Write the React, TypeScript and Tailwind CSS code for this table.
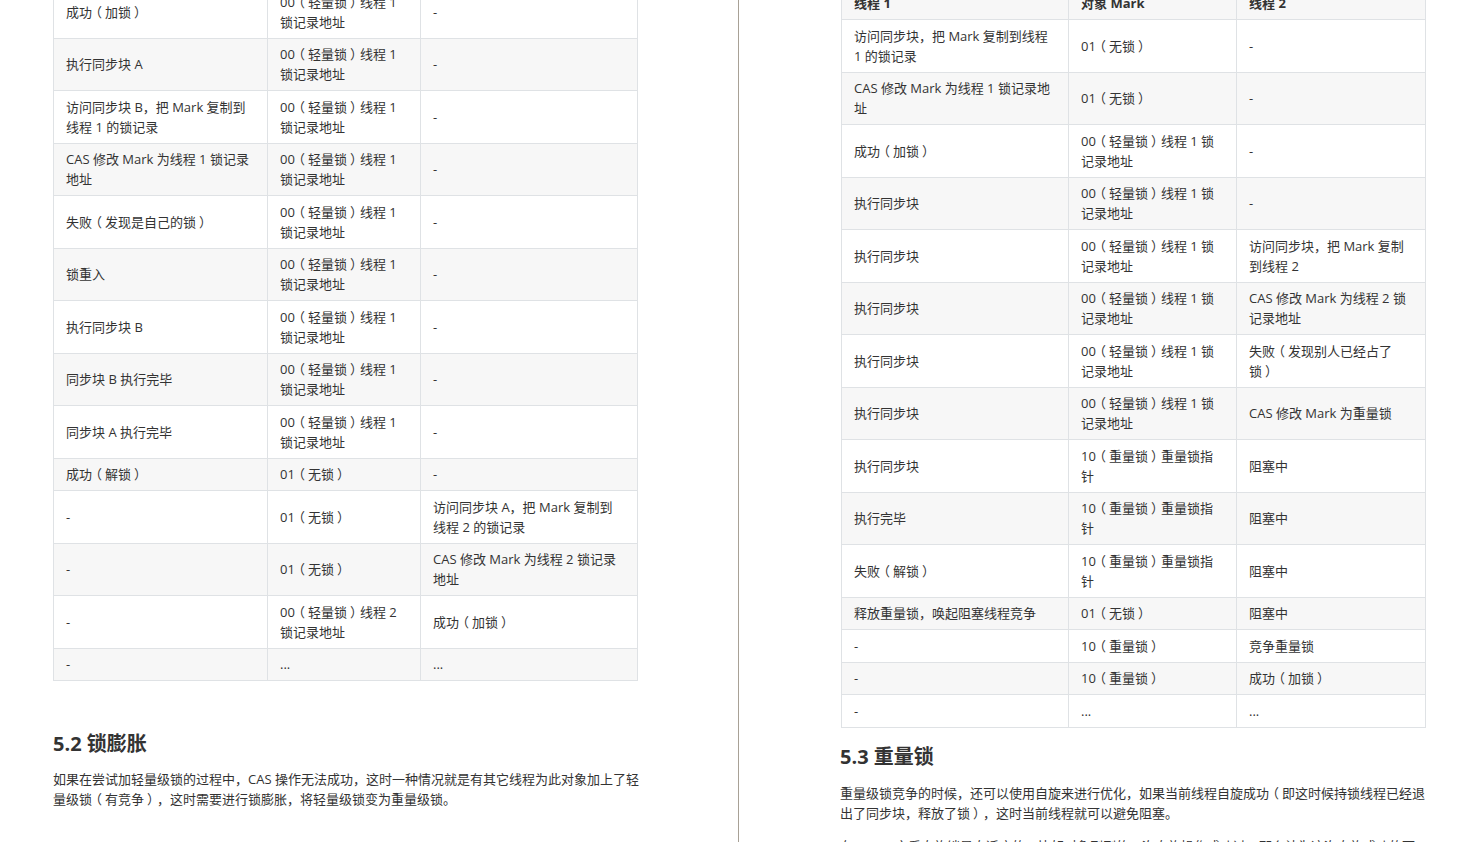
import React from "react";

type Row = [string, string, string];

const leftRows: Row[] = [
  ["成功（加锁）", "00（轻量锁）线程 1 锁记录地址", "-"],
  ["执行同步块 A", "00（轻量锁）线程 1 锁记录地址", "-"],
  ["访问同步块 B，把 Mark 复制到线程 1 的锁记录", "00（轻量锁）线程 1 锁记录地址", "-"],
  ["CAS 修改 Mark 为线程 1 锁记录地址", "00（轻量锁）线程 1 锁记录地址", "-"],
  ["失败（发现是自己的锁）", "00（轻量锁）线程 1 锁记录地址", "-"],
  ["锁重入", "00（轻量锁）线程 1 锁记录地址", "-"],
  ["执行同步块 B", "00（轻量锁）线程 1 锁记录地址", "-"],
  ["同步块 B 执行完毕", "00（轻量锁）线程 1 锁记录地址", "-"],
  ["同步块 A 执行完毕", "00（轻量锁）线程 1 锁记录地址", "-"],
  ["成功（解锁）", "01（无锁）", "-"],
  ["-", "01（无锁）", "访问同步块 A，把 Mark 复制到线程 2 的锁记录"],
  ["-", "01（无锁）", "CAS 修改 Mark 为线程 2 锁记录地址"],
  ["-", "00（轻量锁）线程 2 锁记录地址", "成功（加锁）"],
  ["-", "...", "..."],
];

const rightRows: Row[] = [
  ["访问同步块，把 Mark 复制到线程 1 的锁记录", "01（无锁）", "-"],
  ["CAS 修改 Mark 为线程 1 锁记录地址", "01（无锁）", "-"],
  ["成功（加锁）", "00（轻量锁）线程 1 锁记录地址", "-"],
  ["执行同步块", "00（轻量锁）线程 1 锁记录地址", "-"],
  ["执行同步块", "00（轻量锁）线程 1 锁记录地址", "访问同步块，把 Mark 复制到线程 2"],
  ["执行同步块", "00（轻量锁）线程 1 锁记录地址", "CAS 修改 Mark 为线程 2 锁记录地址"],
  ["执行同步块", "00（轻量锁）线程 1 锁记录地址", "失败（发现别人已经占了锁）"],
  ["执行同步块", "00（轻量锁）线程 1 锁记录地址", "CAS 修改 Mark 为重量锁"],
  ["执行同步块", "10（重量锁）重量锁指针", "阻塞中"],
  ["执行完毕", "10（重量锁）重量锁指针", "阻塞中"],
  ["失败（解锁）", "10（重量锁）重量锁指针", "阻塞中"],
  ["释放重量锁，唤起阻塞线程竞争", "01（无锁）", "阻塞中"],
  ["-", "10（重量锁）", "竞争重量锁"],
  ["-", "10（重量锁）", "成功（加锁）"],
  ["-", "...", "..."],
];

const cell = "border border-[#dfe2e5] px-[12px] py-[5.75px] align-middle";

// full-width parens sit centred in the reference font, nudge them a little
function Text({ value }: { value: string }) {
  const parts = value.split(/([（）])/);
  return (
    <>
      {parts.map((p, i) =>
        p === "（" ? (
          <span key={i} className="relative -left-[3px]">
            {p}
          </span>
        ) : p === "）" ? (
          <span key={i} className="relative left-[3px]">
            {p}
          </span>
        ) : (
          <React.Fragment key={i}>{p}</React.Fragment>
        )
      )}
    </>
  );
}

function LockTable({
  rows,
  widths,
  tableWidth,
  header,
}: {
  rows: Row[];
  widths: [string, string, string];
  tableWidth: string;
  header?: Row;
}) {
  return (
    <table
      className={`${tableWidth} border-collapse table-fixed text-[13px] leading-[20px] text-[#333]`}
    >
      <colgroup>
        <col className={widths[0]} />
        <col className={widths[1]} />
        <col className={widths[2]} />
      </colgroup>
      {header && (
        <thead>
          <tr className="bg-[#f7f7f7]">
            {header.map((h, i) => (
              <th key={i} className={`${cell} text-left font-bold`}>
                {h}
              </th>
            ))}
          </tr>
        </thead>
      )}
      <tbody>
        {rows.map((r, i) => (
          <tr key={i} className={i % 2 === 1 ? "bg-[#f7f7f7]" : "bg-white"}>
            {r.map((c, j) => (
              <td key={j} className={cell}>
                <Text value={c} />
              </td>
            ))}
          </tr>
        ))}
      </tbody>
    </table>
  );
}

export default function App() {
  return (
    <div
      className="flex h-[842px] w-[1461px] overflow-hidden bg-white text-[#333] [text-spacing-trim:space-all]"
      style={{ fontFamily: '"Open Sans", "Noto Sans CJK SC", sans-serif' }}
    >
      {/* left page */}
      <div className="w-[738px] shrink-0 pl-[53px]">
        <div className="-mt-[15px]">
          <LockTable
            rows={leftRows}
            tableWidth="w-[584px]"
            widths={["w-[214px]", "w-[153px]", "w-[217px]"]}
          />
          <h2 className="mt-[48px] text-[20px] leading-[30px] font-bold text-[#333]">
            5.2 锁膨胀
          </h2>
          <p className="mt-[10px] w-[586px] text-[13px] leading-[20px]">
            <Text value="如果在尝试加轻量级锁的过程中，CAS 操作无法成功，这时一种情况就是有其它线程为此对象加上了轻量级锁（有竞争），这时需要进行锁膨胀，将轻量级锁变为重量级锁。" />
          </p>
        </div>
      </div>

      <div className="w-px shrink-0 bg-[#a8a196]" />

      {/* right page */}
      <div className="flex-1 pl-[102px]">
        <div className="-mt-[13.5px]">
          <LockTable
            rows={rightRows}
            header={["线程 1", "对象 Mark", "线程 2"]}
            tableWidth="w-[584px]"
            widths={["w-[227px]", "w-[168px]", "w-[189px]"]}
          />
          <h2 className="-ml-px mt-[14px] text-[20px] leading-[30px] font-bold text-[#333]">
            5.3 重量锁
          </h2>
          <div className="-ml-px mt-[11px] w-[586px] text-[13px] leading-[20px]">
            <p className="mb-[13px]">
              <Text value="重量级锁竞争的时候，还可以使用自旋来进行优化，如果当前线程自旋成功（即这时候持锁线程已经退出了同步块，释放了锁），这时当前线程就可以避免阻塞。" />
            </p>
            <p>
              <Text value="在 Java 6 之后自旋锁是自适应的，比如对象刚刚的一次自旋操作成功过，那么认为这次自旋成功的可能性会高，就多自旋几次；反之，就少自旋甚至不自旋，总之，比较智能。" />
            </p>
          </div>
        </div>
      </div>
    </div>
  );
}
